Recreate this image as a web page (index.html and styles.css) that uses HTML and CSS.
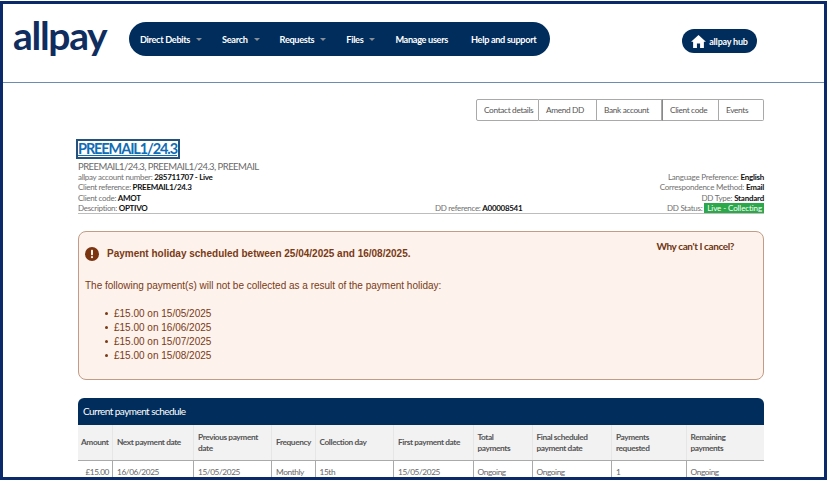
FILE: index.html
```html
<!DOCTYPE html>
<html lang="en">
<head>
<meta charset="utf-8">
<title>allpay</title>
<link rel="stylesheet" href="styles.css">
</head>
<body>
<div class="frame">
  <header class="header">
    <div class="logo">allpay</div>
    <nav class="nav">
      <a class="nav-item">Direct Debits<span class="caret"></span></a>
      <a class="nav-item">Search<span class="caret"></span></a>
      <a class="nav-item">Requests<span class="caret"></span></a>
      <a class="nav-item">Files<span class="caret"></span></a>
      <a class="nav-item">Manage users</a>
      <a class="nav-item nav-help">Help and support</a>
    </nav>
    <a class="hub">
      <svg class="hub-icon" viewBox="0 0 16 14" aria-hidden="true"><path d="M8 0 L16 7.2 L13.8 7.2 L13.8 14 L9.7 14 L9.7 9.2 L6.3 9.2 L6.3 14 L2.2 14 L2.2 7.2 L0 7.2 Z" fill="#fff"/></svg>
      allpay hub
    </a>
  </header>
  <main class="content">
    <div class="tabs">
      <a class="tab tab-contact">Contact details</a>
      <a class="tab tab-amend">Amend DD</a>
      <a class="tab tab-bank">Bank account</a>
      <a class="tab tab-client">Client code</a>
      <a class="tab tab-events">Events</a>
    </div>
    <section class="summary">
      <h1 class="title"><a class="title-link">PREEMAIL1/24.3</a></h1>
      <div class="subtitle">PREEMAIL1/24.3, PREEMAIL1/24.3, PREEMAIL</div>
      <div class="details">
        <div class="col col-left">
          <div>allpay account number: <b>285711707 - Live</b></div>
          <div>Client reference: <b>PREEMAIL1/24.3</b></div>
          <div>Client code: <b>AMOT</b></div>
          <div>Description: <b>OPTIVO</b></div>
        </div>
        <div class="col col-mid">
          <div>DD reference: <b>A00008541</b></div>
        </div>
        <div class="col col-right">
          <div>Language Preference: <b>English</b></div>
          <div>Correspondence Method: <b>Email</b></div>
          <div>DD Type: <b>Standard</b></div>
          <div>DD Status: <span class="status">Live - Collecting</span></div>
        </div>
      </div>
    </section>
    <section class="alert">
      <div class="alert-head">
        <div class="alert-title">
          <svg class="alert-icon" viewBox="0 0 14 14" aria-hidden="true"><circle cx="7" cy="7" r="7" fill="#7a3410"/><rect x="6" y="2.8" width="2" height="5.4" rx=".6" fill="#fdf2ec"/><circle cx="7" cy="10.2" r="1.1" fill="#fdf2ec"/></svg>
          <span>Payment holiday scheduled between 25/04/2025 and 16/08/2025.</span>
        </div>
        <a class="why">Why can't I cancel?</a>
      </div>
      <p class="alert-text">The following payment(s) will not be collected as a result of the payment holiday:</p>
      <ul class="alert-list">
        <li>£15.00 on 15/05/2025</li>
        <li>£15.00 on 16/06/2025</li>
        <li>£15.00 on 15/07/2025</li>
        <li>£15.00 on 15/08/2025</li>
      </ul>
    </section>
    <section class="schedule">
      <h2 class="schedule-title">Current payment schedule</h2>
      <div class="row row-head">
        <div class="cell cell-right">Amount</div>
        <div class="cell">Next payment date</div>
        <div class="cell">Previous payment date</div>
        <div class="cell">Frequency</div>
        <div class="cell">Collection day</div>
        <div class="cell">First payment date</div>
        <div class="cell">Total payments</div>
        <div class="cell">Final scheduled payment date</div>
        <div class="cell">Payments requested</div>
        <div class="cell cell-last">Remaining payments</div>
      </div>
      <div class="row row-body">
        <div class="cell cell-right">£15.00</div>
        <div class="cell">16/06/2025</div>
        <div class="cell">15/05/2025</div>
        <div class="cell">Monthly</div>
        <div class="cell">15th</div>
        <div class="cell">15/05/2025</div>
        <div class="cell">Ongoing</div>
        <div class="cell">Ongoing</div>
        <div class="cell">1</div>
        <div class="cell">Ongoing</div>
      </div>
    </section>
  </main>
</div>
</body>
</html>
```

FILE: styles.css
```css
* { box-sizing: border-box; }
html, body { margin: 0; padding: 0; background: #fff; }
body { width: 829px; height: 480px; overflow: hidden; font-family: "Lato", "Liberation Sans", sans-serif; }
.frame {
  width: 827px; height: 479px; margin-top: 1px;
  border: 3px solid #0a2a6a; overflow: hidden; background: #fff;
}
.header {
  height: 79px; border-bottom: 1px solid #6d8cb0;
  display: flex; align-items: flex-start; padding-left: 10px;
}
.logo {
  width: 116px; margin-top: 9px;
  font: 700 39px/44px "Lato", sans-serif; color: #0f2d5e; letter-spacing: -1.3px;
}
.nav {
  width: 421px; height: 34px; margin-top: 18px; padding-left: 11px;
  display: flex; align-items: center; gap: 20px;
  background: #002d5c; border-radius: 17px;
  color: #fff; font-size: 9.2px; font-weight: 700; letter-spacing: -0.33px; white-space: nowrap;
}
.nav-help { margin-left: 3px; }
.caret {
  display: inline-block; margin-left: 6px; vertical-align: 2px;
  border-left: 3px solid transparent; border-right: 3px solid transparent;
  border-top: 3px solid #8a8f98;
}
.hub {
  width: 75px; height: 24px; margin: 25px 0 0 132px;
  display: flex; align-items: center; justify-content: center; gap: 3px;
  background: #002d5c; border-radius: 12px;
  color: #fff; font-size: 9px; font-weight: 700; letter-spacing: -0.2px; white-space: nowrap;
}
.hub-icon { width: 15px; height: 13px; }
.content { padding: 16px 60px 0 75px; }
.tabs { display: flex; justify-content: flex-end; height: 22px; }
.tab {
  display: flex; align-items: center; height: 22px; padding-left: 7px;
  border: 1px solid #a9a9a9; border-left-width: 0;
  font-size: 8.3px; letter-spacing: -0.35px; color: #555; white-space: nowrap;
}
.tab-contact { width: 63px; border-left-width: 1px; border-radius: 2px 0 0 2px; }
.tab-amend { width: 58px; }
.tab-bank { width: 65px; }
.tab-client { width: 57px; border-left: 1px solid #888; }
.tab-events { width: 45px; border-radius: 0 2px 2px 0; }
.summary { margin-top: 18px; height: 75px; border-bottom: 1px solid #bdbdbd; }
.title { margin: 0 0 0 -2px; height: 20px; font-size: 0; }
.title-link {
  display: inline-block; height: 20px; padding: 0 1px 0 0; border: 2px solid #24527f;
  font-size: 14.5px; line-height: 16px; font-weight: 700; letter-spacing: -1.1px; color: #0f6cb5; text-decoration: underline;
}
.subtitle { margin-top: 1px; height: 12px; font-size: 9.5px; letter-spacing: -0.55px; line-height: 14px; color: #6a6a6a; }
.details {
  margin-top: 0; display: flex; align-items: flex-end;
  font-size: 8px; letter-spacing: -0.3px; line-height: 10.4px; color: #707070;
}
.details b { color: #111; font-weight: 700; }
.col-left { width: 357px; }
.col-mid { flex: 1; }
.col-right { text-align: right; letter-spacing: -0.24px; }
.status { display: inline-block; padding: 0 2px 0 3px; line-height: 10px; letter-spacing: -0.1px; background: #2aa84a; color: #fff; }
.alert {
  margin-top: 17px; height: 149px; padding: 15px 6px 0;
  background: #fdf2ec; border: 1px solid #c29c84; border-radius: 8px;
  font-family: "Liberation Sans", Arial, sans-serif; color: #7a3a14;
  font-size: 10px; line-height: 14px;
}
.alert-head { display: flex; justify-content: space-between; align-items: flex-start; }
.alert-title { display: flex; align-items: center; gap: 8px; font-weight: 700; }
.alert-icon { width: 14px; height: 14px; }
.why {
  margin: -8px 23px 0 0; font-family: "Lato", sans-serif; font-size: 10px;
  font-weight: 700; letter-spacing: -0.4px; color: #6d3512;
}
.alert-text { margin: 18px 0 0; }
.alert-list { margin: 14px 0 0; padding-left: 20px; list-style: none; }
.alert-list li::before {
  content: ""; display: inline-block; width: 3px; height: 3px; margin-right: 6px;
  vertical-align: 2px; border-radius: 50%; background: #7a3a14;
}
.schedule { margin-top: 18px; }
.schedule-title {
  margin: 0; height: 27px; padding-left: 5px;
  background: #002d5c; border-radius: 6px 6px 0 0;
  font-size: 10px; line-height: 27px; letter-spacing: -0.55px; font-weight: 400; color: #fff;
}
.row {
  display: grid;
  grid-template-columns: 34px 81px 78px 43.5px 78.5px 79.5px 59px 79.5px 74.5px 78.5px;
}
.row-head { height: 36px; background: #f2f2f2; border-bottom: 1px solid #aaa; font-weight: 700; color: #555; }
.row-body { height: 30px; color: #666; }
.cell { padding: 0 4px; font-size: 8.3px; letter-spacing: -0.4px; line-height: 10.5px; }
.row-head .cell { display: flex; align-items: center; border-left: 1px solid #e6e6e6; }
.row-head .cell:first-child { border-left: 0; }
.row-head .cell-last { padding-right: 30px; }
.row-body .cell { padding-top: 6px; border-left: 1px solid #aaa; }
.row-body .cell:first-child { border-left: 0; }
.cell-right { padding-right: 3px; padding-left: 3px; text-align: right; }
```
